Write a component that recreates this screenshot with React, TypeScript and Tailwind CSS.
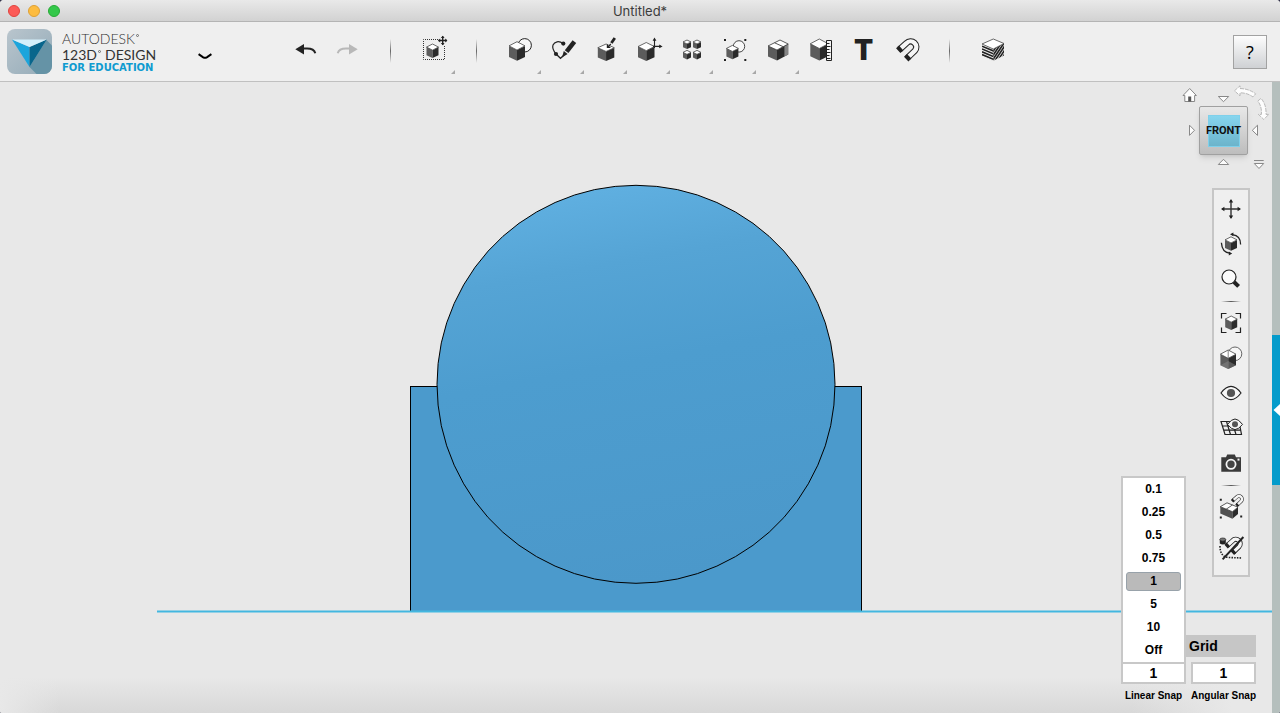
import { useState, type ReactNode } from "react"
import clsx from "clsx"

const INK = "#222"

interface CubeProps {
  x: number
  y: number
  w: number
  h: number
}

// isometric cube fitted into the given box
function Cube({ x, y, w, h }: CubeProps) {
  const cx = x + w / 2
  const up = y + h * 0.22
  const mid = y + h * 0.44
  const low = y + h * 0.8
  return (
    <g strokeLinejoin="round">
      <path d={`M${x} ${up}L${cx} ${mid}V${y + h}L${x} ${low}Z`} fill="#5c5c5c" />
      <path d={`M${x + w} ${up}L${cx} ${mid}V${y + h}L${x + w} ${low}Z`} fill="#2b2b2b" />
      <path
        d={`M${cx} ${y}L${x + w} ${up}L${cx} ${mid}L${x} ${up}Z`}
        fill="#fff"
        stroke="#444"
        strokeWidth={0.8}
      />
    </g>
  )
}

interface MagnetProps {
  transform?: string
}

function Magnet({ transform }: MagnetProps) {
  const arm = "M14.5 27.5L21.5 21.2A5.6 5.6 0 0 1 29.8 28.8L22.5 35.8"
  return (
    <g transform={transform} fill="none">
      <path d={arm} stroke={INK} strokeWidth={6.4} />
      <path d={arm} stroke="#f6f6f6" strokeWidth={4.4} />
      <path d="M13.2 28.7L16.2 26M21.2 37.1L24.2 34.2" stroke={INK} strokeWidth={6.4} />
    </g>
  )
}

const undoArrow = (
  <>
    <path d="M12.3 27.2L21 22V32.4Z" fill="currentColor" />
    <path d="M20 26.6H24Q31 26.6 32.3 31.2" fill="none" stroke="currentColor" strokeWidth={2} />
  </>
)

interface Tool {
  label: string
  menu?: boolean
  muted?: boolean
  icon?: ReactNode
}

const tools: (Tool | null)[] = [
  { label: "Undo", icon: undoArrow },
  { label: "Redo", muted: true, icon: <g transform="translate(44 0) scale(-1 1)">{undoArrow}</g> },
  null,
  {
    label: "Transform",
    menu: true,
    icon: (
      <>
        <path
          d="M26 17.5H11.5V37.5H32.5V24"
          fill="none"
          stroke="#333"
          strokeDasharray="1 1"
        />
        <Cube x={14.5} y={22} w={12} h={14} />
        <path d="M26.5 18.5H35M30.7 14.3V23" stroke={INK} strokeWidth={1.4} />
        <path
          d="M26 18.5L28.2 16.6V20.4ZM35.4 18.5L33.2 16.6V20.4ZM30.7 13.8L28.8 16H32.6ZM30.7 23.2L28.8 21H32.6Z"
          fill={INK}
        />
      </>
    ),
  },
  null,
  {
    label: "Primitives",
    menu: true,
    icon: (
      <>
        <circle cx={26.7} cy={23.3} r={6.7} fill="#f6f6f6" stroke={INK} />
        <Cube x={11} y={19.7} w={16} h={19} />
      </>
    ),
  },
  {
    label: "Sketch",
    menu: true,
    icon: (
      <>
        <path
          d="M22 21.5C18 18.5 13.5 19.5 12 23C10.8 26.5 13 29.5 15 32L19.5 36.3L23 33"
          fill="none"
          stroke={INK}
          strokeWidth={1.2}
        />
        <circle cx={22.3} cy={21.6} r={2.1} fill={INK} />
        <circle cx={15} cy={32} r={2.1} fill={INK} />
        <path d="M25.6 29.6L33.4 19.6" stroke={INK} strokeWidth={4.6} />
        <path d="M22.8 29L26.6 32L21 35.6Z" fill={INK} />
      </>
    ),
  },
  {
    label: "Construct",
    menu: true,
    icon: (
      <>
        <Cube x={13.8} y={22} w={16.5} h={17} />
        <path d="M30.8 16L27.4 21" stroke={INK} strokeWidth={2.8} />
        <path d="M26.8 22L24 25M23.4 22.6V25.4H26.4" fill="none" stroke={INK} strokeWidth={1.2} />
      </>
    ),
  },
  {
    label: "Modify",
    menu: true,
    icon: (
      <>
        <Cube x={11} y={20.5} w={16.5} h={18.5} />
        <path d="M27.5 26V17M26 24.4H34" stroke={INK} strokeWidth={1.1} />
        <path d="M27.5 15.4L25.6 18.8H29.4ZM35.6 24.4L32.2 22.5V26.3Z" fill={INK} />
      </>
    ),
  },
  {
    label: "Pattern",
    menu: true,
    icon: (
      <>
        <Cube x={13} y={18} w={8} h={9} />
        <Cube x={23} y={18} w={8} h={9} />
        <Cube x={13} y={28.4} w={8} h={9} />
        <Cube x={23} y={28.4} w={8} h={9} />
      </>
    ),
  },
  {
    label: "Grouping",
    menu: true,
    icon: (
      <>
        <path
          d="M11 17h2v2h-2zM31.3 17h2v2h-2zM11 37h2v2h-2zM31.3 37h2v2h-2z"
          fill={INK}
        />
        <circle cx={26} cy={24.4} r={5.7} fill="#f8f8f8" stroke="#333" strokeWidth={0.9} />
        <Cube x={13.4} y={23.4} w={12} h={13.8} />
      </>
    ),
  },
  {
    label: "Combine",
    menu: true,
    icon: (
      <>
        <path d="M12 24L21 28V38.5L12 34.4Z" fill="#5c5c5c" />
        <path d="M21 28L32.2 22V32.4L21 38.5Z" fill="#2b2b2b" />
        <path d="M28.4 24L32.2 22V32.4L28.4 34.4Z" fill="#858585" />
        <path d="M12 24L24 18L32.2 22L21 28Z" fill="#fff" stroke="#333" strokeWidth={0.8} />
        <path d="M18.6 20.8L27 24.6" stroke="#444" strokeWidth={0.9} />
      </>
    ),
  },
  {
    label: "Measure",
    icon: (
      <>
        <Cube x={11.3} y={17} w={18} h={21.6} />
        <path d="M27.5 18.5H32.5V38.5H27.5Z" fill="#f4f4f4" stroke={INK} />
        <path d="M28 21.5H30.5M28 24.5H31.5M28 27.5H30.5M28 30.5H31.5M28 33.5H30.5M28 36.5H31.5" stroke={INK} />
      </>
    ),
  },
  { label: "Text" },
  { label: "Snap", icon: <Magnet /> },
  null,
  {
    label: "Material",
    icon: (
      <>
        <defs>
          <clipPath id="materialLeft">
            <path d="M11 22L22.3 27V38.8L11 34Z" />
          </clipPath>
          <clipPath id="materialRight">
            <path d="M22.3 27L33 21.5V33.6L22.3 38.8Z" />
          </clipPath>
        </defs>
        <path
          clipPath="url(#materialLeft)"
          d="M11 24.2L23 29.2M11 27L23 32M11 29.8L23 34.8M11 32.6L23 37.6M11 35.4L23 40.4"
          stroke={INK}
          strokeWidth={1.6}
        />
        <path
          clipPath="url(#materialRight)"
          d="M21 31L27 22M21 35L30 21.5M21 39L33 21M23.4 39.4L34 23.5M26 39.6L34 27.6M28.6 39.8L34 31.7"
          stroke={INK}
          strokeWidth={1.6}
        />
        <path d="M22.3 17L33 21.5L22.3 27L11 22Z" fill="#fff" stroke="#444" strokeWidth={0.8} />
      </>
    ),
  },
]

const viewTools: (Tool | null)[] = [
  {
    label: "Pan",
    icon: (
      <>
        <path d="M8 17H26M17 8V26" stroke="#333" strokeWidth={1.4} />
        <path
          d="M7 17L10.4 14.8V19.2ZM27 17L23.6 14.8V19.2ZM17 7L14.8 10.4H19.2ZM17 27L14.8 23.6H19.2Z"
          fill={INK}
        />
      </>
    ),
  },
  {
    label: "Orbit",
    icon: (
      <>
        <Cube x={11} y={9.8} w={12} h={14} />
        <path
          d="M18.5 7.6C23.6 8.2 26.6 12 26.6 17.4M7.4 15.8C7.8 22 10.6 25.6 15.5 26.2"
          fill="none"
          stroke={INK}
          strokeWidth={1.3}
        />
        <path d="M16 7.2L19.4 5.4V9.2ZM18.2 26.6L14.8 24.6V28.4Z" fill={INK} />
      </>
    ),
  },
  {
    label: "Zoom",
    icon: (
      <>
        <circle cx={15} cy={15} r={7} fill="#fbfbfb" stroke={INK} strokeWidth={1.2} />
        <path d="M20 20L24.6 24.4" stroke={INK} strokeWidth={4} />
      </>
    ),
  },
  null,
  {
    label: "Fit",
    icon: (
      <>
        <path
          d="M7.5 12.5V7.5H12.5M21.5 7.5H26.5V12.5M26.5 21.5V26.5H21.5M12.5 26.5H7.5V21.5"
          fill="none"
          stroke={INK}
          strokeWidth={1.2}
        />
        <Cube x={11.2} y={10} w={12} h={14} />
      </>
    ),
  },
  {
    label: "Material display",
    icon: (
      <>
        <circle cx={21} cy={12.8} r={6.8} fill="#f6f6f6" stroke="#555" strokeWidth={0.9} />
        <Cube x={6.4} y={9} w={15.6} h={19} />
        <path d="M6.4 24.2L14.2 20L22 24.2L14.2 28Z" fill="#888" opacity={0.5} />
        <path d="M14.2 9.2V17" stroke="#666" strokeWidth={0.8} />
      </>
    ),
  },
  {
    label: "Show or hide",
    icon: (
      <>
        <path
          d="M7 17Q12 10.4 17 10.4T27 17Q22 23.6 17 23.6T7 17Z"
          fill="#f8f8f8"
          stroke={INK}
          strokeWidth={1.2}
        />
        <circle cx={17} cy={17} r={4.1} fill="#555" />
      </>
    ),
  },
  {
    label: "Grid visibility",
    icon: (
      <>
        <path
          d="M7 10.5H25L27.5 23.5H11ZM8.5 15H26M9.8 19.2H26.8M12.5 10.5L16.5 23.5M18 10.5L22 23.5"
          fill="none"
          stroke={INK}
          strokeWidth={1.2}
        />
        <path
          d="M13.5 13.4Q17.5 8 21 8T28.5 13.4Q24.5 18.6 21 18.6T13.5 13.4Z"
          fill="#f6f6f6"
          stroke={INK}
        />
        <circle cx={21} cy={13.3} r={3} fill="#555" />
      </>
    ),
  },
  {
    label: "Screenshot",
    icon: (
      <>
        <path d="M7.3 11.3H12L13.2 8.6H20.8L22 11.3H27V25.8H7.3Z" fill="#3a3a3a" />
        <circle cx={17} cy={18.3} r={4.6} fill="#444" stroke="#f4f4f4" strokeWidth={1.8} />
        <path d="M23.5 12.6h2v2h-2z" fill="#f4f4f4" />
      </>
    ),
  },
  null,
  {
    label: "Snap while grouping",
    icon: (
      <>
        <path d="M6.3 16.7L18.4 21.7V28.7L6.3 23.5Z" fill="#505050" />
        <path d="M18.4 21.7L24 17.2V24L18.4 28.7Z" fill="#2b2b2b" />
        <path
          d="M6.3 16.7L13 12.8L24 17.2L18.4 21.7ZM12.2 19.2L18.4 15"
          fill="#fff"
          stroke="#333"
          strokeWidth={0.8}
        />
        <Magnet transform="translate(10.8 -4.6) scale(.55)" />
        <path d="M5.8 8.8h2v2h-2zM5.8 26.6h2v2h-2zM26.2 25.6h2v2h-2z" fill={INK} />
      </>
    ),
  },
  {
    label: "Snapping off",
    icon: (
      <>
        <path
          d="M6 16Q6 27 15 27.5L27.5 28"
          fill="none"
          stroke={INK}
          strokeWidth={1.6}
          strokeDasharray="1.5 1.2"
        />
        <path d="M5.8 9.6V13.4Q8.8 15.6 11.8 13.4V9.6Z" fill={INK} />
        <ellipse cx={8.8} cy={9.6} rx={3} ry={1.6} fill="#777" stroke={INK} strokeWidth={0.7} />
        <Magnet transform="translate(1.8 -5.8) scale(.78)" />
        <path d="M29.4 7L8.6 29.4" stroke={INK} strokeWidth={2} />
      </>
    ),
  },
]

const snapValues = ["0.1", "0.25", "0.5", "0.75", "1", "5", "10", "Off"]

// the cylinder is drawn as a faceted outline
const facets = Array.from({ length: 60 }, (_, i) => {
  const a = (i / 60) * Math.PI * 2
  return `${(636 + 199 * Math.cos(a)).toFixed(1)},${(302.3 + 199 * Math.sin(a)).toFixed(1)}`
}).join(" ")

function TitleBar() {
  return (
    <div className="relative flex h-[22px] items-center justify-center border-b border-[#b4b4b4] bg-linear-to-b from-[#e9e9e9] to-[#d2d2d2]">
      <div className="absolute left-2 flex gap-2">
        <button aria-label="Close" className="size-3 rounded-full border border-[#e0443e] bg-[#fc5b57]" />
        <button aria-label="Minimize" className="size-3 rounded-full border border-[#dea034] bg-[#fdbc40]" />
        <button aria-label="Zoom window" className="size-3 rounded-full border border-[#27aa35] bg-[#34c84a]" />
      </div>
      <h1 className="font-['Inter',sans-serif] text-[13px] leading-4 text-[#3c3c3c]">Untitled*</h1>
    </div>
  )
}

function TradeMark() {
  return (
    <svg className="mt-[3px] ml-px" width={3} height={3} viewBox="0 0 3 3" aria-hidden="true">
      <circle cx={1.5} cy={1.5} r={1} fill="none" stroke="#555" strokeWidth={0.8} />
    </svg>
  )
}

function Brand() {
  return (
    <div className="flex w-[283px] shrink-0 items-center pl-[7px]">
      <svg width={45} height={45} viewBox="0 0 45 45" aria-hidden="true">
        <defs>
          <linearGradient id="tile" x1="0" y1="0" x2="1" y2="1">
            <stop offset="0" stopColor="#b9c5cd" />
            <stop offset="1" stopColor="#94abb8" />
          </linearGradient>
        </defs>
        <rect width={45} height={45} rx={8} fill="url(#tile)" />
        <path d="M39.5 11L45 16.5V37A8 8 0 0 1 37 45H29.5L22.5 38Z" fill="#6593a6" />
        <path d="M5 10.5L22.5 18V38Z" fill="#1ba5dc" />
        <path d="M39.8 10.5L22.5 18V38Z" fill="#08668c" />
        <path d="M5 10.5H39.8L22.5 18Z" fill="#d3f0fb" />
      </svg>
      <div className="ml-[10px] w-[120px] font-['Lato',sans-serif] text-[#333]">
        <div className="flex text-[14px] leading-4 font-light">
          <span>AUTODESK</span>
          <TradeMark />
        </div>
        <div className="flex text-[14px] leading-4">
          <span>123D</span>
          <TradeMark />
          <span className="ml-1">DESIGN</span>
        </div>
        <div className="font-['DejaVu_Sans',sans-serif] text-[10px] leading-[10px] font-bold text-[#0f9bd0]">
          FOR EDUCATION
        </div>
      </div>
      <button
        aria-label="Application menu"
        className="ml-[11px] flex h-8 w-6 items-end justify-center pb-2"
      >
        <svg width={14} height={7} viewBox="0 0 14 7" fill="none" stroke="#000" strokeWidth={2}>
          <path d="M0.6 1.2L5.2 4.3Q7 5.2 8.8 4.3L13.4 1.2" />
        </svg>
      </button>
    </div>
  )
}

function Toolbar() {
  return (
    <header className="flex h-[60px] border-b border-[#c0c0c0] bg-[#efefef]">
      <Brand />
      <nav aria-label="Tools" className="flex">
        {tools.map((tool, i) =>
          tool ? (
            <button
              key={tool.label}
              aria-label={tool.label}
              disabled={tool.muted}
              className={clsx(
                "flex w-[43px] justify-center",
                tool.muted ? "text-[#b8b8b8]" : "text-[#222]",
              )}
            >
              {tool.icon ? (
                <svg width={43} height={59} viewBox="0 0 43 59">
                  {tool.icon}
                  {tool.menu && <path d="M43 48V52H39Z" fill="#a8a8a8" />}
                </svg>
              ) : (
                <span className="mt-3 font-['Inter',sans-serif] text-[28px] leading-8 font-black">T</span>
              )}
            </button>
          ) : (
            <div key={i} className="flex w-[43px] items-start justify-center pt-[17px]">
              <div className="h-6 w-px bg-linear-to-b from-transparent via-[#666] to-transparent" />
            </div>
          ),
        )}
      </nav>
      <button
        aria-label="Help"
        className="mt-[13px] mr-[13px] ml-auto size-[34px] border border-[#a2a2a2] bg-linear-to-b from-[#fdfdfd] to-[#cfd1d4] font-['Open_Sans',sans-serif] text-[18px] leading-8 font-normal text-black"
      >
        ?
      </button>
    </header>
  )
}

function Model() {
  return (
    <svg
      className="absolute inset-0 h-full w-full"
      viewBox="0 0 1272 631"
      role="img"
      aria-label="Front view of the model"
    >
      <defs>
        <linearGradient id="body" x1="0.38" y1="0" x2="0.56" y2="1">
          <stop offset="0" stopColor="#60b0e1" />
          <stop offset="0.2" stopColor="#55a4d5" />
          <stop offset="0.45" stopColor="#4d9dcf" />
          <stop offset="1" stopColor="#4b98ca" />
        </linearGradient>
      </defs>
      <rect x={410.5} y={304.5} width={451} height={225} fill="#4b9acc" stroke="#000" />
      <polygon points={facets} fill="url(#body)" stroke="#000" />
      <path d="M157 529.5H1272" stroke="#43b7e0" strokeWidth={2} />
    </svg>
  )
}

function ViewCube() {
  return (
    <div className="relative h-[106px] w-[92px] pt-[24px] pl-[19px]">
      <svg
        className="absolute inset-0"
        width={92}
        height={92}
        viewBox="0 0 92 92"
        fill="#fdfdfd"
        stroke="#888"
        aria-hidden="true"
      >
        <path d="M3 13.5L9.7 6.5L16.4 13.5H14.6V19.5H4.8V13.5Z" />
        <path d="M8.2 14.5h3v5h-3z" fill="#555" stroke="none" />
        <path d="M38.3 14.5H48.7L43.5 19.7ZM9.5 43.2L14.5 48.3L9.5 53.4ZM77.5 43.2L72.3 48.3L77.5 53.4ZM38.3 82.5H48.7L43.5 77.3Z" />
        <path d="M74 78.5H83.7M74.3 81.5H83.7L79 86.5Z" />
        <path
          d="M54.5 8.8L60 3.8V6.5Q69 6.8 75.6 11.8L73 15Q67.5 10.8 60 10.8V13.8Z"
          stroke="#aaa"
          strokeWidth={0.8}
          strokeDasharray="4 1"
        />
        <path
          d="M77.8 19L81 16.4Q86.5 22.5 86 32.4H88.8L83.8 37.4L78.4 32.4H81.4Q82 24.5 77.8 19Z"
          stroke="#aaa"
          strokeWidth={0.8}
          strokeDasharray="4 1"
        />
      </svg>
      <button className="relative flex size-[49px] items-center justify-center rounded-[2px] border border-[#a0a0a0] bg-linear-to-b from-[#e8e8e8] to-[#bdbdbd] shadow-md">
        <span className="flex size-8 items-center justify-center border border-[#7fd0ea] bg-linear-to-b from-[#86d5ee] to-[#6cb4cb] font-['Roboto',sans-serif] text-[11px] leading-4 font-bold text-[#111]">
          FRONT
        </span>
      </button>
    </div>
  )
}

function ViewPanel() {
  return (
    <nav
      aria-label="View"
      className="mr-[22px] flex w-[38px] flex-col items-center border-2 border-[#c6c6c6] bg-[#efefef] pt-[2px] pb-[10px]"
    >
      {viewTools.map((tool, i) =>
        tool ? (
          <button key={tool.label} aria-label={tool.label} className="last:mt-[5px]">
            <svg width={34} height={35} viewBox="0 0 34 35">
              {tool.icon}
            </svg>
          </button>
        ) : (
          <div key={i} className="flex h-[9px] w-5 items-center">
            <div className="h-px w-full bg-linear-to-r from-transparent via-[#555] to-transparent" />
          </div>
        ),
      )}
    </nav>
  )
}

interface SnapFieldProps {
  label: string
  value: string
  options: string[]
  onChange: (value: string) => void
  children?: ReactNode
}

function SnapField({ label, value, options, onChange, children }: SnapFieldProps) {
  return (
    <label className="relative flex w-[65px] flex-col items-center gap-[6px]">
      {children}
      <select
        value={value}
        onChange={(e) => onChange(e.target.value)}
        className="h-[22px] w-full appearance-none border-2 border-[#c8c8c8] bg-white text-center text-[14px] leading-4 font-bold [text-align-last:center]"
      >
        {options.map((o) => (
          <option key={o}>{o}</option>
        ))}
      </select>
      <span className="text-[10px] leading-3 font-bold whitespace-nowrap">{label}</span>
    </label>
  )
}

function SnapControls() {
  const [linear, setLinear] = useState("1")
  const [angular, setAngular] = useState("1")

  return (
    <div className="mt-auto mr-4 mb-[11px] flex flex-col items-end gap-[5px] font-['Liberation_Sans',Arial,sans-serif] text-black">
      <button className="h-[22px] w-[70px] bg-[#c6c6c6] pl-[3px] text-left text-[14px] leading-5 font-bold">
        Grid
      </button>
      <div className="flex gap-[5px]">
        <SnapField label="Linear Snap" value={linear} options={snapValues} onChange={setLinear}>
          <div
            role="listbox"
            aria-label="Linear snap values"
            className="absolute bottom-[38px] left-0 flex w-full flex-col border-2 border-[#c8c8c8] bg-white px-[3px]"
          >
            {snapValues.map((v) => (
              <button
                key={v}
                role="option"
                aria-selected={v === linear}
                onClick={() => setLinear(v)}
                className={clsx(
                  "my-[2px] h-[19px] rounded-[3px] border pb-[2px] text-[12px] leading-4 font-bold",
                  v === linear ? "border-[#98a2aa] bg-[#bababa]" : "border-transparent",
                )}
              >
                {v}
              </button>
            ))}
          </div>
        </SnapField>
        <SnapField label="Angular Snap" value={angular} options={["1", "5", "15", "45"]} onChange={setAngular} />
      </div>
    </div>
  )
}

export default function App() {
  return (
    <div className="bg-[#33334a]">
      <div className="flex min-h-screen flex-col overflow-hidden rounded-t-[4px] rounded-b-[2px] bg-[#e8e8e8]">
        <TitleBar />
        <Toolbar />
        <div className="flex flex-1">
          <main className="relative flex flex-1 justify-end bg-[linear-gradient(to_right,#e8e8e8,transparent_60px),linear-gradient(to_left,#e8e8e8_40px,transparent_140px),linear-gradient(to_top,#d8d8d8,transparent_36px)]">
            <Model />
            <div className="relative flex flex-col items-end">
              <ViewCube />
              <ViewPanel />
              <SnapControls />
            </div>
          </main>
          <aside className="w-2 bg-[#b5bfbd] pt-[253px]">
            <button
              aria-label="Open parts bin"
              className="flex h-[150px] w-full items-center justify-end bg-[#049bcb]"
            >
              <svg width={7} height={12} viewBox="0 0 7 12" fill="#fff">
                <path d="M7 0V12L0.5 6Z" />
              </svg>
            </button>
          </aside>
        </div>
      </div>
    </div>
  )
}
